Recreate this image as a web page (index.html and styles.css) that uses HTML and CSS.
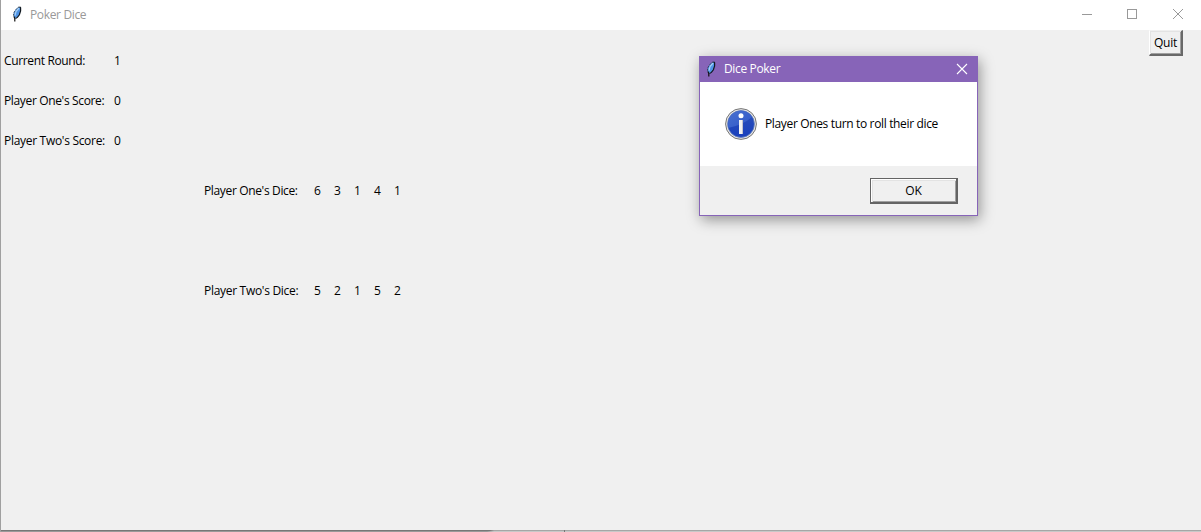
FILE: index.html
```html
<!DOCTYPE html>
<html lang="en">
<head>
<meta charset="utf-8">
<title>Poker Dice</title>
<link rel="stylesheet" href="styles.css">
</head>
<body>
<svg width="0" height="0" class="defs">
  <symbol id="feather" viewBox="0 0 12 18">
    <path d="M8.500 2L9.500 3V6L8.200 10L6 12.500L4 13.500L2.800 12V8L4.500 5L6.500 3Z" fill="#4f94e6"/>
    <path d="M8 3L5 6.500L4 10.500" fill="none" stroke="#a9d2f5" stroke-width="1.200"/>
    <path d="M8.500 1.800L9.600 2.800V6L8.400 9.800L6.400 12.400L4.500 13.500" fill="none" stroke="#101820" stroke-width="1.200"/>
    <path d="M8 1.800L4.800 4.500L2.600 8.200V12" fill="none" stroke="#26394d" stroke-width=".9" stroke-dasharray="2 1"/>
    <path d="M3 11.500L3.800 13.500V16.500" fill="none" stroke="#101010" stroke-width="1.200"/>
  </symbol>
</svg>
<div class="window">
  <header class="titlebar">
    <svg class="app-icon" width="12" height="18"><use href="#feather"/></svg>
    <span class="title">Poker Dice</span>
    <svg class="controls" width="102" height="12" fill="none" stroke="#999" shape-rendering="crispEdges">
      <path d="M0 6.500H10M45.500 1.500H54.500V10.500H45.500Z"/>
      <path d="M91 1L101 11M101 1L91 11" shape-rendering="auto"/>
    </svg>
  </header>
  <main class="content">
    <div class="scores">
      <span>Current Round:</span><span>1</span>
      <span>Player One's Score:</span><span>0</span>
      <span class="second">Player Two's Score:</span><span>0</span>
    </div>
    <div class="dice">
      <span>Player One's Dice:</span><span>6</span><span>3</span><span>1</span><span>4</span><span>1</span>
      <span class="second">Player Two's Dice:</span><span>5</span><span>2</span><span>1</span><span>5</span><span>2</span>
    </div>
    <button class="quit">Quit</button>
  </main>
  <footer class="edge"></footer>
</div>
<section class="dialog">
  <header class="dialog-bar">
    <svg class="app-icon" width="12" height="18"><use href="#feather"/></svg>
    <span class="dialog-title">Dice Poker</span>
    <svg class="close" width="12" height="12" stroke="#fff" stroke-width="1.1"><path d="M1 1L11 11M11 1L1 11"/></svg>
  </header>
  <div class="dialog-body">
    <svg class="info" width="32" height="32" viewBox="0 0 32 32">
      <defs>
        <linearGradient id="blue" x1="0" y1="0" x2="0" y2="1"><stop offset="0" stop-color="#2c50b8"/><stop offset="1" stop-color="#1940bd"/></linearGradient>
        <linearGradient id="shine" x1="0" y1="0" x2="1" y2="1"><stop offset="0" stop-color="#4870d0"/><stop offset="1" stop-color="#2f57c8"/></linearGradient>
      </defs>
      <circle cx="16" cy="16" r="15.400" fill="#e4e4e4" stroke="#777" stroke-width="1"/>
      <circle cx="16" cy="16" r="13.400" fill="url(#blue)" stroke="#6580bd" stroke-width=".8"/>
      <path d="M3 17A13 13 0 0 1 27 9Q18 17 3 20Z" fill="url(#shine)"/>
      <circle cx="16" cy="7.800" r="2.500" fill="#fff"/>
      <path d="M14 12H18V26H14Z" fill="#f2f2f2"/>
      <path d="M17.500 12V26" stroke="#c3c3cc"/>
    </svg>
    <span class="message">Player Ones turn to roll their dice</span>
  </div>
  <div class="dialog-actions"><button class="ok"><span>OK</span></button></div>
</section>
</body>
</html>
```
FILE: styles.css
```css
* { box-sizing: border-box; }
body { margin: 0; font: 12px/20px "Open Sans", "Noto Sans", sans-serif; color: #000; overflow: hidden; }
.defs { position: absolute; }
.window { width: 1201px; height: 532px; display: flex; flex-direction: column; border-left: 1px solid #a0a0a0; background: #f0f0f0; }
.titlebar { height: 30px; background: #fff; display: flex; align-items: center; padding: 0 17px 2px 10px; color: #999; }
.title { margin-left: 7px; letter-spacing: -.35px; padding-top: 2px; }
.controls { margin-left: auto; }
.content { flex: 1; display: grid; grid-template-columns: 200px 1fr 34px; padding-right: 18px; align-items: start; }
.scores { display: grid; grid-template-columns: 110px 1fr; grid-auto-rows: 40px; padding: 21px 0 0 3px; white-space: nowrap; letter-spacing: -.35px; }
.dice { display: grid; grid-template-columns: 110px repeat(5, 20px); grid-auto-rows: 100px; padding: 151px 0 0 3px; white-space: nowrap; letter-spacing: -.35px; }
.second { letter-spacing: -.3px; }
.quit { width: 34px; height: 26px; padding: 0; border: 1px solid #fff; border-right: 2px solid #696969; border-bottom: 2px solid #696969; border-top-color: #f0f0f0; background: #f0f0f0; box-shadow: inset 1px 1px #e3e3e3, inset -1px -1px #a0a0a0; font: inherit; letter-spacing: -.2px; }
.edge { height: 2px; background: linear-gradient(#777, #777) 563px 0 / 1px 2px no-repeat, linear-gradient(90deg, #777 489px, #a6a6a6 493px) 0 0 / 100% 1px no-repeat, linear-gradient(90deg, #999 486px, #c8c8c8 493px); }
.dialog { position: absolute; left: 699px; top: 56px; width: 279px; height: 160px; border: 1px solid #8764b8; background: #fff; box-shadow: 2px 4px 13px rgba(0,0,0,.38); display: flex; flex-direction: column; }
.dialog-bar { height: 25px; background: #8764b8; color: #fff; display: flex; align-items: center; padding: 0 9px 1px 5px; }
.dialog-title { margin-left: 7px; letter-spacing: -.35px; }
.close { margin-left: auto; }
.dialog-body { height: 84px; display: flex; align-items: center; padding-left: 25px; white-space: nowrap; letter-spacing: -.35px; }
.message { margin-left: 8px; }
.dialog-actions { flex: 1; background: #f0f0f0; display: flex; justify-content: flex-end; padding: 12px 19px 0 0; }
.ok { width: 88px; height: 26px; padding: 0; background: #f0f0f0; border: 1px solid #646464; border-right-width: 2px; border-bottom-width: 2px; box-shadow: inset 1px 1px #fff, inset 2px 2px #e3e3e3, inset -1px -1px #a0a0a0; font: inherit; letter-spacing: -.2px; }
```
